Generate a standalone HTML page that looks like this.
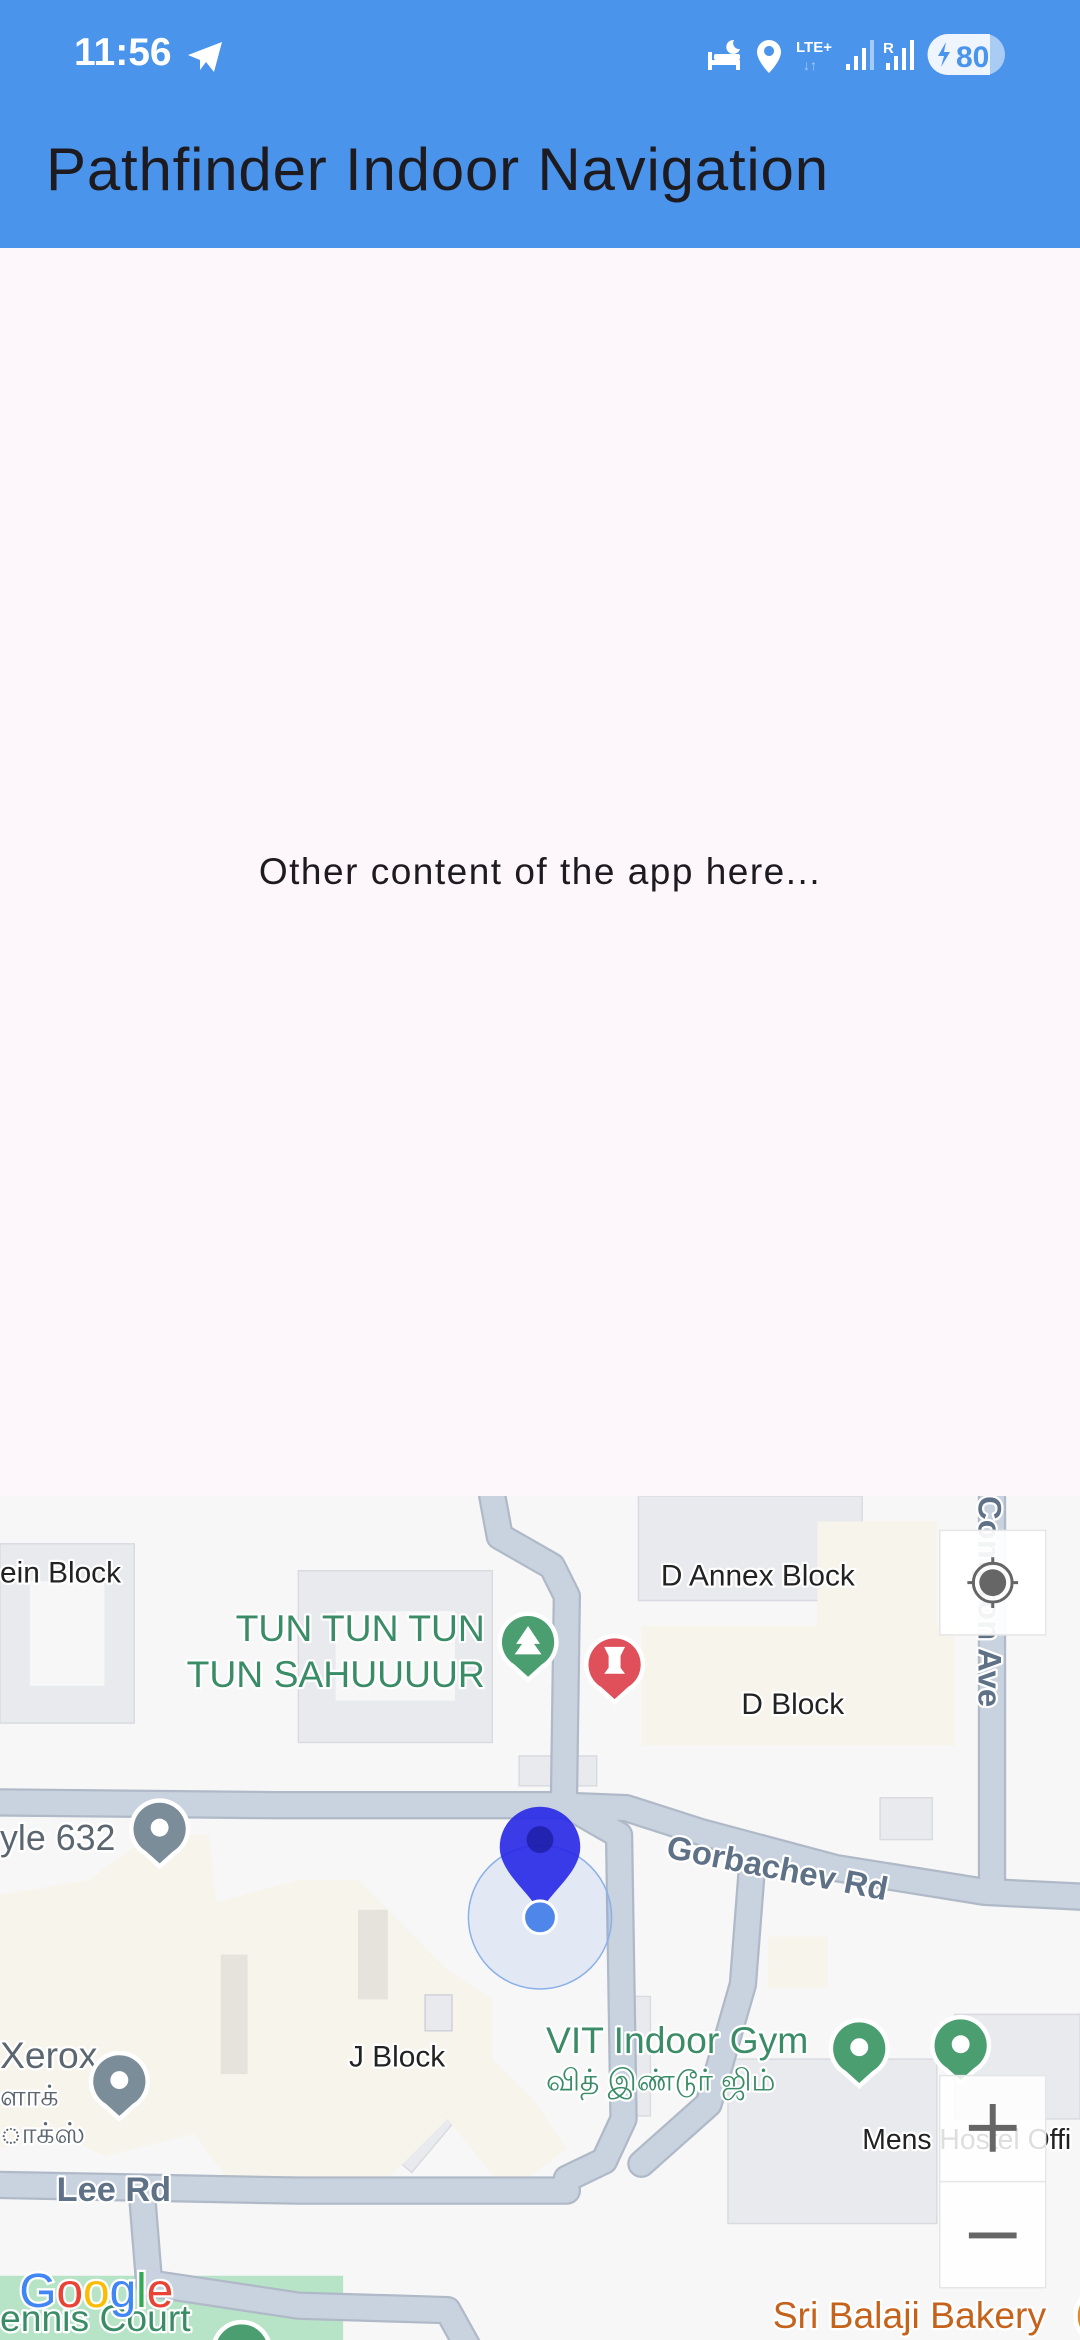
<!DOCTYPE html>
<html><head><meta charset="utf-8">
<style>
html,body{margin:0;padding:0;}
body{width:1080px;height:2340px;overflow:hidden;background:#FDF7FC;font-family:"Liberation Sans","Noto Sans CJK JP",sans-serif;position:relative;}
#bar{position:absolute;left:0;top:0;width:1080px;height:248px;background:#4A94EC;}
#time{position:absolute;left:74px;top:31px;font-size:39px;font-weight:bold;color:#fff;letter-spacing:0px;}
#title{position:absolute;left:46px;top:135px;font-size:60px;color:#1d1b20;letter-spacing:0.8px;}
#other{position:absolute;left:0;width:1080px;top:851px;text-align:center;font-size:37px;color:#1d1b20;letter-spacing:1.5px;}
#map{position:absolute;left:0;top:1496px;}
</style></head><body>
<div id="bar">
  <div id="time">11:56</div>
  <svg style="position:absolute;left:186px;top:40px" width="40" height="34" viewBox="0 0 40 34"><path d="M2 15 L36 2 L28 32 L20 22 L14 30 L14 20 Z M14 20 L32 6 L20 22" fill="#fff"/></svg>
  <svg style="position:absolute;left:700px;top:30px" width="320" height="50" viewBox="0 0 320 50">
    <g fill="#fff">
      <rect x="8" y="22" width="4" height="18"/><rect x="8" y="30" width="32" height="5"/><rect x="36" y="30" width="4" height="10"/><rect x="14" y="24" width="26" height="6" rx="2"/>
      <path d="M34 10 a7 7 0 1 0 6 9 a6 6 0 0 1 -6 -9z"/>
      <path d="M69 10 a12 12 0 0 1 12 12 c0 9 -12 21 -12 21 c0 0 -12 -12 -12 -21 a12 12 0 0 1 12 -12z M69 16 a5 5 0 1 0 0.1 0z" fill-rule="evenodd"/>
      <text x="96" y="22" font-size="15" font-weight="bold" font-family="Liberation Sans">LTE+</text>
      <rect x="146" y="34" width="4" height="6"/><rect x="154" y="26" width="4" height="14"/><rect x="162" y="18" width="4" height="22"/><rect x="170" y="10" width="4" height="30" opacity="0.5"/>
      <text x="183" y="23" font-size="15" font-weight="bold" font-family="Liberation Sans">R</text>
      <rect x="186" y="33" width="4" height="7"/><rect x="194" y="26" width="4" height="14"/><rect x="202" y="18" width="4" height="22"/><rect x="210" y="10" width="4" height="30"/>
    </g>
    <text x="103" y="40" font-size="14" fill="#A8CCF4">↓↑</text>
    <rect x="228" y="4" width="77" height="41" rx="20.5" fill="#A8CCF4"/>
    <path d="M248 4 h42 v41 h-42 a20.5 20.5 0 0 1 0 -41z" fill="#EEF5FE"/>
    <path d="M246 12 l-8 14 h6 l-3 11 l9 -15 h-6 z" fill="#4A94EC"/>
    <text x="256" y="37" font-size="30" font-weight="bold" fill="#4A94EC" font-family="Liberation Sans">80</text>
  </svg>
  <div id="title">Pathfinder Indoor Navigation</div>
</div>
<div id="other">Other content of the app here...</div>

<svg id="map" width="1080" height="844" viewBox="0 1003 724 565" preserveAspectRatio="none" font-family="Liberation Sans">
  <rect x="0" y="1003" width="724" height="565" fill="#F7F7F7"/>
  <g fill="#E9EAEE" stroke="#DADBE0" stroke-width="1">
    <rect x="0" y="1035" width="90" height="120"/>
    <rect x="200" y="1053" width="130" height="115"/>
    <rect x="428" y="1003" width="150" height="70"/>
    <rect x="348" y="1177" width="52" height="20"/>
    <rect x="590" y="1205" width="35" height="28"/>
    <rect x="488" y="1380" width="140" height="110"/>
    <rect x="640" y="1350" width="84" height="70"/>
    <rect x="418" y="1338" width="18" height="80"/>
    <rect x="260" y="1390" width="40" height="60" transform="rotate(40 280 1420)"/>
  </g>
  <rect x="20" y="1060" width="50" height="70" fill="#F7F7F7"/>
  <rect x="225" y="1080" width="80" height="60" fill="#F7F7F7"/>
  <g fill="#F7F4EC">
    <rect x="430" y="1090" width="210" height="80"/>
    <rect x="548" y="1020" width="80" height="70"/>
    <rect x="515" y="1298" width="40" height="34"/>
    <polygon points="0,1270 60,1260 100,1230 140,1230 145,1275 200,1260 240,1260 300,1320 330,1340 330,1380 360,1410 380,1440 340,1470 300,1420 270,1450 250,1470 200,1460 160,1470 130,1430 70,1445 40,1430 0,1440"/>
  </g>
  <g fill="#E5E3DC"><rect x="148" y="1310" width="18" height="80"/><rect x="240" y="1280" width="20" height="60"/></g>
  <rect x="285" y="1337" width="18" height="24" fill="#E9EAEE" stroke="#cfd1d8"/>
  <rect x="0" y="1525" width="230" height="43" fill="#B7E4C7"/>
  <g fill="none" stroke-linecap="round" stroke-linejoin="round">
    <g stroke="#AFB9C7" stroke-width="19">
      <path d="M-10 1208 L185 1210 L370 1210 L420 1212 L470 1228 L560 1252 L660 1268 L740 1272"/>
      <path d="M330 1003 L335 1030 L370 1050 L380 1070 L378 1210"/>
      <path d="M380 1210 L415 1230 L418 1420 L405 1448 L380 1460"/>
      <path d="M-10 1464 L200 1468 L380 1468"/>
      <path d="M505 1240 L498 1330 L475 1410 L430 1450"/>
      <path d="M665 1003 L665 1262"/>
      <path d="M95 1468 L100 1530 L200 1545 L300 1548 L315 1575"/>
    </g>
    <g stroke="#C9D3DF" stroke-width="16">
      <path d="M-10 1208 L185 1210 L370 1210 L420 1212 L470 1228 L560 1252 L660 1268 L740 1272"/>
      <path d="M330 1003 L335 1030 L370 1050 L380 1070 L378 1210"/>
      <path d="M380 1210 L415 1230 L418 1420 L405 1448 L380 1460"/>
      <path d="M-10 1464 L200 1468 L380 1468"/>
      <path d="M505 1240 L498 1330 L475 1410 L430 1450"/>
      <path d="M665 1003 L665 1262"/>
      <path d="M95 1468 L100 1530 L200 1545 L300 1548 L315 1575"/>
    </g>
  </g>
  <g paint-order="stroke" stroke="#fff" stroke-width="3" stroke-linejoin="round">
    <text x="0" y="1061" font-size="20" fill="#222">ein Block</text>
    <text x="443" y="1063" font-size="20" fill="#222">D Annex Block</text>
    <text x="497" y="1149" font-size="20" fill="#222">D Block</text>
    <text x="325" y="1100" font-size="25" fill="#3A8C66" text-anchor="end">TUN TUN TUN</text>
    <text x="325" y="1131" font-size="25" fill="#3A8C66" text-anchor="end">TUN SAHUUUUR</text>
    <text x="0" y="1240" font-size="24" fill="#5C6670">yle 632</text>
    <text x="234" y="1385" font-size="20" fill="#222">J Block</text>
    <text x="366" y="1376" font-size="25" fill="#3A8C66">VIT Indoor Gym</text>
    <text x="366" y="1401" font-size="20" fill="#3A8C66" font-family="Liberation Sans, Noto Sans CJK JP, sans-serif">வித் இண்டூர் ஜிம்</text>
    <text x="0" y="1386" font-size="25" fill="#5C6670">Xerox</text>
    <text x="0" y="1411" font-size="19" fill="#5C6670">ளாக்</text>
    <text x="0" y="1436" font-size="19" fill="#5C6670">ாக்ஸ்</text>
    <text x="578" y="1440" font-size="19" fill="#222">Mens Hostel Offi</text>
    <text x="0" y="1562" font-size="25" fill="#3A8C66">ennis Court</text>
    <text x="518" y="1560" font-size="25" fill="#C5621B">Sri Balaji Bakery</text>
    <text x="38" y="1475" font-size="23" font-weight="bold" fill="#5F7186">Lee Rd</text>
    <text x="446" y="1245" font-size="22" font-weight="bold" fill="#5F7186" transform="rotate(11 446 1245)">Gorbachev Rd</text>
    <text x="656" y="1003" font-size="22" font-weight="bold" fill="#5F7186" transform="rotate(90 656 1003)">Compton Ave</text>
  </g>
  <g stroke="#fff" stroke-width="3">
    <path d="M354 1126 l-10 -9 a19 19 0 1 1 20 0z" fill="#4A9E70"/>
    <path d="M412 1141 l-10 -9 a19 19 0 1 1 20 0z" fill="#E0505A"/>
    <path d="M107 1251 l-10 -9 a19 19 0 1 1 20 0z" fill="#7C8D9A"/>
    <path d="M80 1420 l-10 -9 a19 19 0 1 1 20 0z" fill="#7C8D9A"/>
    <path d="M576 1398 l-10 -9 a19 19 0 1 1 20 0z" fill="#4A9E70"/>
    <path d="M644 1396 l-10 -9 a19 19 0 1 1 20 0z" fill="#4A9E70"/>
    <circle cx="740" cy="1552" r="19" fill="#E08A2A"/>
    <circle cx="162" cy="1575" r="19" fill="#4A9E70"/>
  </g>
  <g fill="#fff">
    <circle cx="107" cy="1225" r="6"/><circle cx="80" cy="1394" r="6"/><circle cx="576" cy="1372" r="6"/><circle cx="644" cy="1370" r="6"/>
    <path d="M354 1090 l-8 12 h4 l-5 7 h18 l-5 -7 h4z"/>
    <path d="M405 1104 h14 l-3 6 v8 l3 4 h-14 l3 -4 v-8z"/>
  </g>
  <circle cx="362" cy="1285" r="48" fill="#4A86E8" fill-opacity="0.12" stroke="#8AB0E8" stroke-width="1"/>
  <path d="M362 1282 C355 1268 335 1255 335 1238 a27 27 0 0 1 54 0 C389 1255 369 1268 362 1282z" fill="#2A2AE6" fill-opacity="0.92"/>
  <circle cx="362" cy="1233" r="9" fill="#1A1A9A" opacity="0.7"/>
  <circle cx="362" cy="1285" r="11" fill="#4E86EA" stroke="#fff" stroke-width="2"/>
  <rect x="630" y="1026" width="71" height="70" fill="#fff" fill-opacity="0.92" stroke="#e6e6e6"/>
  <circle cx="665.5" cy="1061" r="9" fill="#666"/>
  <circle cx="665.5" cy="1061" r="13" fill="none" stroke="#666" stroke-width="2"/>
  <path d="M665.5 1044 v5 M665.5 1073 v5 M648.5 1061 h5 M677.5 1061 h5" stroke="#666" stroke-width="2"/>
  <rect x="630" y="1391" width="71" height="142" fill="#fff" fill-opacity="0.85" stroke="#e6e6e6"/>
  <line x1="630" y1="1462" x2="701" y2="1462" stroke="#e6e6e6"/>
  <path d="M665.5 1410 v32 M649.5 1426 h32" stroke="#666" stroke-width="4"/>
  <path d="M649.5 1498 h32" stroke="#666" stroke-width="4"/>
  <g font-size="32" font-family="Liberation Sans" paint-order="stroke" stroke="#fff" stroke-width="3">
    <text x="13" y="1546"><tspan fill="#4285F4">G</tspan><tspan fill="#EA4335">o</tspan><tspan fill="#FBBC05">o</tspan><tspan fill="#4285F4">g</tspan><tspan fill="#34A853">l</tspan><tspan fill="#EA4335">e</tspan></text>
  </g>
</svg>
</body></html>
